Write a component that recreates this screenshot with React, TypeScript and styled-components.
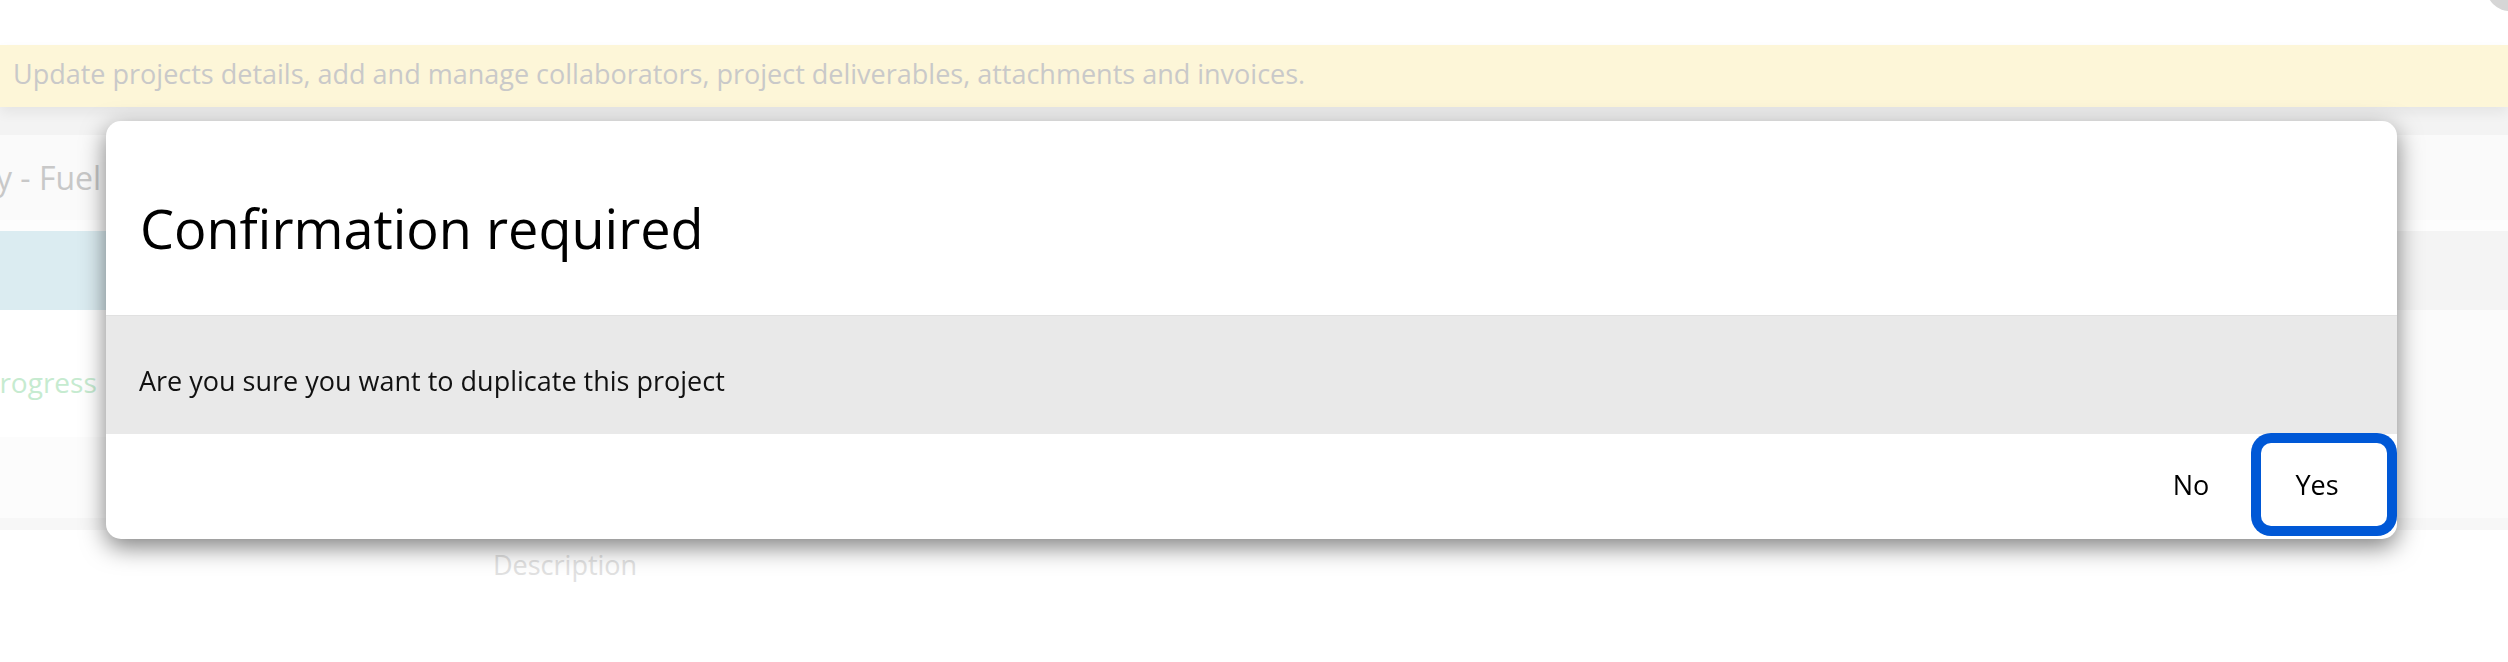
import React, { FC } from "react";
import styled, { createGlobalStyle, css } from "styled-components";

const GlobalStyle = createGlobalStyle`
  html, body {
    margin: 0;
    padding: 0;
    background: #ffffff;
  }
  body {
    font-family: "Open Sans", "Noto Sans", sans-serif;
    overflow: hidden;
  }
`;

const Page = styled.div`
  width: 100%;
  height: 662px;
  display: flex;
  flex-direction: column;
  overflow: hidden;
`;

const TopBar = styled.div`
  height: 45px;
  display: flex;
  justify-content: flex-end;
  align-items: flex-start;
  overflow: hidden;
`;

const Avatar = styled.div`
  width: 48px;
  height: 48px;
  border-radius: 50%;
  background: #d6d6d6;
  margin-top: -37px;
  margin-right: -26px;
`;

const Banner = styled.div`
  height: 62px;
  box-sizing: border-box;
  display: flex;
  align-items: center;
  padding: 0 0 6px 13px;
  background: #fdf6d8;
  color: #c9c9c9;
  font-size: 27px;
  box-shadow: 0 6px 12px rgba(0, 0, 0, 0.06);
  position: relative;
  z-index: 1;
`;

const Spacer = styled.div`
  height: 28px;
  background: #f3f3f3;
`;

const TitleRow = styled.div`
  height: 85px;
  display: flex;
  align-items: center;
  background: #fafafa;
  color: #c8c8c8;
  font-size: 32px;
  white-space: nowrap;
`;

const CutText = styled.span<{ $shift: number }>`
  margin-left: ${(p) => -p.$shift}px;
`;

const GapRow = styled.div`
  height: 11px;
  background: #fdfdfd;
`;

const SplitRow = styled.div<{ $height: number }>`
  height: ${(p) => p.$height}px;
  display: grid;
  grid-template-columns: 1fr 1fr;
`;

const Cell = styled.div<{ $bg: string }>`
  background: ${(p) => p.$bg};
  display: flex;
  flex-direction: column;
`;

const StatusTop = styled.div`
  height: 127px;
  box-sizing: border-box;
  padding-top: 53px;
  background: #ffffff;
  color: #c6ebd0;
  font-size: 28px;
  line-height: 38px;
  white-space: nowrap;
`;

const StatusBottom = styled.div`
  flex: 1;
  background: #fcfcfc;
`;

const Divider = styled.div`
  height: 12px;
  background: #f7f7f7;
`;

const DescriptionRow = styled.div`
  padding: 17px 0 0 493px;
  color: #e1e1e1;
  font-size: 27px;
  line-height: 36px;
`;

const Backdrop = styled.div`
  position: fixed;
  inset: 0;
  padding: 121px 111px 0 106px;
  z-index: 10;
`;

const Modal = styled.div`
  background: #ffffff;
  border-radius: 15px;
  box-shadow: 0 8px 24px rgba(0, 0, 0, 0.5);
  overflow: hidden;
`;

const ModalHeader = styled.div`
  height: 194px;
  box-sizing: border-box;
  padding: 75px 34px 0;
`;

const ModalTitle = styled.h4`
  margin: 0;
  font-size: 54px;
  line-height: 64px;
  font-weight: 400;
  color: #000000;
`;

const ModalBody = styled.div`
  height: 119px;
  box-sizing: border-box;
  padding: 47px 33px 0;
  background: #e9e9e9;
  border-top: 1px solid #e1e1e1;
  font-size: 27px;
  line-height: 36px;
  color: #111111;
`;

const ModalFooter = styled.div`
  height: 105px;
  box-sizing: border-box;
  display: flex;
  justify-content: flex-end;
  align-items: flex-start;
  padding: 9px 10px 0 0;
`;

const Button = styled.button<{ $focused?: boolean }>`
  width: 126px;
  height: 83px;
  border: none;
  border-radius: 10px;
  background: transparent;
  font-family: inherit;
  font-size: 27px;
  font-weight: 500;
  color: #000000;
  padding: 0 14px 0 0;
  cursor: pointer;

  ${(p) =>
    p.$focused &&
    css`
      box-shadow: 0 0 0 10px #0058d6;
    `}
`;

const App: FC = () => {
  return (
    <>
      <GlobalStyle />
      <Page>
        <TopBar>
          <Avatar />
        </TopBar>
        <Banner>
          Update projects details, add and manage collaborators, project
          deliverables, attachments and invoices.
        </Banner>
        <Spacer />
        <TitleRow>
          <CutText $shift={4}>y - Fuel</CutText>
        </TitleRow>
        <GapRow />
        <SplitRow $height={79}>
          <Cell $bg="#dbecf1" />
          <Cell $bg="#f4f4f4" />
        </SplitRow>
        <SplitRow $height={208}>
          <Cell $bg="#ffffff">
            <StatusTop>
              <CutText $shift={50}>In progress</CutText>
            </StatusTop>
            <StatusBottom />
          </Cell>
          <Cell $bg="#fbfbfb" />
        </SplitRow>
        <Divider />
        <DescriptionRow>Description</DescriptionRow>
      </Page>
      <Backdrop>
        <Modal role="dialog" aria-modal="true">
          <ModalHeader>
            <ModalTitle>Confirmation required</ModalTitle>
          </ModalHeader>
          <ModalBody>Are you sure you want to duplicate this project</ModalBody>
          <ModalFooter>
            <Button>No</Button>
            <Button $focused>Yes</Button>
          </ModalFooter>
        </Modal>
      </Backdrop>
    </>
  );
};

export default App;
